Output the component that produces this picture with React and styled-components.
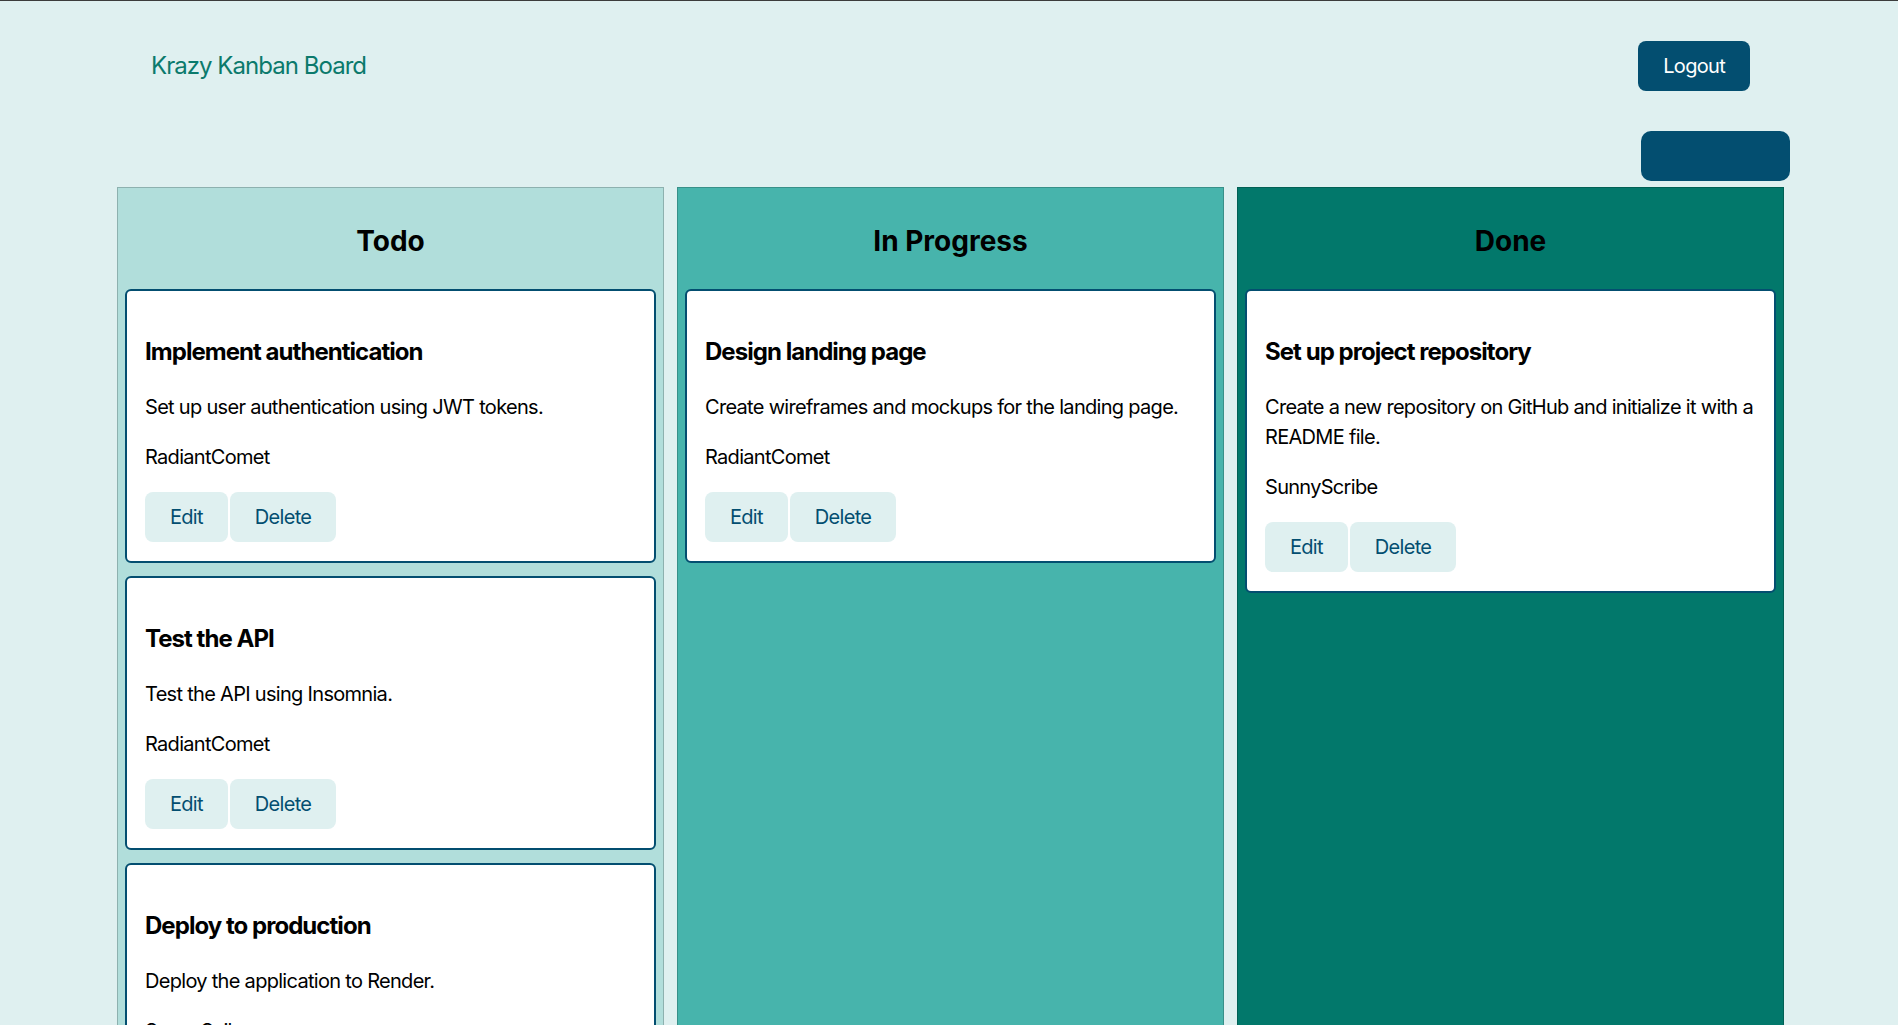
import React from 'react';
import styled, { createGlobalStyle } from 'styled-components';

const GlobalStyle = createGlobalStyle`
  html, body {
    margin: 0;
    padding: 0;
    background-color: #dff0f0;
    font-family: Inter, "Noto Sans", sans-serif;
    font-size: 20px;
    line-height: 1.5;
    letter-spacing: -0.035em;
    color: #000;
  }
  #root {
    border-top: 1px solid #3c3c3c;
    min-height: 100vh;
    box-sizing: border-box;
  }
`;

const Nav = styled.nav`
  display: flex;
  justify-content: space-between;
  align-items: center;
  padding: 40px 148px 0 151px;
`;

const Brand = styled.div`
  color: #0b7a6c;
  font-size: 24px;
  font-weight: 400;
  letter-spacing: -0.04em;
`;

const Button = styled.button`
  font-family: inherit;
  font-size: 20px;
  line-height: 30px;
  letter-spacing: inherit;
  padding: 10px 25px;
  border: none;
  border-radius: ${({ radius }) => radius || 8}px;
  cursor: pointer;
  background-color: ${({ variant }) => (variant === 'light' ? '#dff0f0' : '#034e70')};
  color: ${({ variant }) => (variant === 'light' ? '#034e70' : '#ffffff')};
  min-height: 50px;
  box-sizing: border-box;
`;

const ToolRow = styled.div`
  display: flex;
  justify-content: flex-end;
  padding: 40px 108px 0 0;
`;

const BlankButton = styled(Button)`
  width: 149px;
  height: 50px;
`;

const Board = styled.div`
  display: grid;
  grid-template-columns: repeat(3, 1fr);
  gap: 13px;
  width: 1667px;
  margin: 6px 0 0 117px;
`;

const colColors = {
  todo: '#b1dedb',
  progress: '#47b4ac',
  done: '#02786b',
};

const Column = styled.section`
  background-color: ${({ kind }) => colColors[kind]};
  border: 1px solid rgba(0, 0, 0, 0.2);
  padding: 7px 7px 16px;
  display: flex;
  flex-direction: column;
  gap: 13px;
`;

const ColumnTitle = styled.h2`
  text-align: center;
  font-size: 28px;
  font-weight: 700;
  line-height: 42px;
  letter-spacing: 0;
  margin: 25px 0 14px;
`;

const Card = styled.div`
  background: #fff;
  border: 2px solid #034e70;
  border-radius: 6px;
  padding: 17px 18px 19px;
`;

const CardTitle = styled.h3`
  font-size: 24px;
  font-weight: 700;
  line-height: 36px;
  letter-spacing: -0.04em;
  margin: 26px 0 22px;
`;

const CardText = styled.p`
  margin: 20px 0;
`;

const Actions = styled.div`
  display: flex;
  gap: 2px;
`;

const columns = [
  {
    kind: 'todo',
    title: 'Todo',
    cards: [
      { name: 'Implement authentication', desc: 'Set up user authentication using JWT tokens.', who: 'RadiantComet' },
      { name: 'Test the API', desc: 'Test the API using Insomnia.', who: 'RadiantComet' },
      { name: 'Deploy to production', desc: 'Deploy the application to Render.', who: 'SunnySail' },
    ],
  },
  {
    kind: 'progress',
    title: 'In Progress',
    cards: [
      { name: 'Design landing page', desc: 'Create wireframes and mockups for the landing page.', who: 'RadiantComet' },
    ],
  },
  {
    kind: 'done',
    title: 'Done',
    cards: [
      {
        name: 'Set up project repository',
        desc: 'Create a new repository on GitHub and initialize it with a README file.',
        who: 'SunnyScribe',
      },
    ],
  },
];

function App() {
  return (
    <>
      <GlobalStyle />
      <Nav>
        <Brand>Krazy Kanban Board</Brand>
        <Button>Logout</Button>
      </Nav>
      <ToolRow>
        <BlankButton radius={10} />
      </ToolRow>
      <Board>
        {columns.map((col) => (
          <Column key={col.kind} kind={col.kind}>
            <ColumnTitle>{col.title}</ColumnTitle>
            {col.cards.map((card) => (
              <Card key={card.name}>
                <CardTitle>{card.name}</CardTitle>
                <CardText>{card.desc}</CardText>
                <CardText>{card.who}</CardText>
                <Actions>
                  <Button variant="light">Edit</Button>
                  <Button variant="light">Delete</Button>
                </Actions>
              </Card>
            ))}
          </Column>
        ))}
      </Board>
    </>
  );
}

export default App;
